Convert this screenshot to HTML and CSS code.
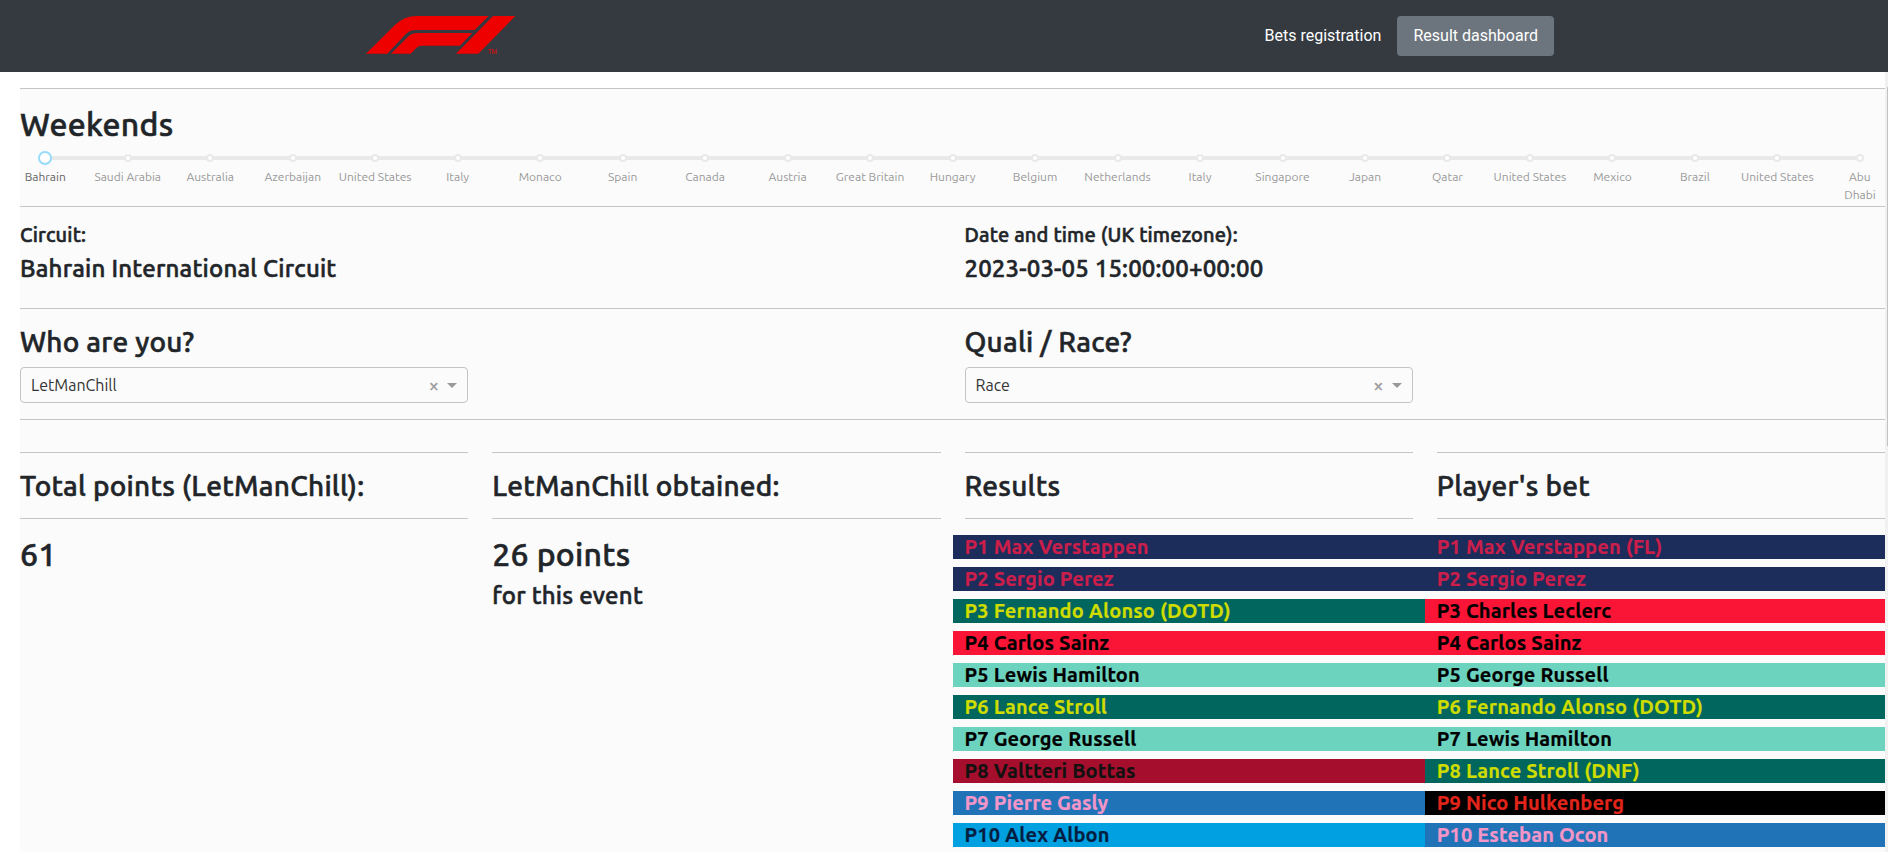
FILE: index.html
```html
<!DOCTYPE html>
<html lang="en">
<head>
<meta charset="utf-8">
<title>Result dashboard</title>
<link rel="stylesheet" href="styles.css">
</head>
<body>
<header class="navbar">
  <svg class="logo" viewBox="79 48 450 114" role="img" aria-label="F1">
    <path d="M79 161 L165 76 Q193 48 232 48 H447 L405 90 H229 Q210 90 198 103 L143 161 Z"/>
    <path d="M154 161 L204 111 Q216 99 232 99 H398 L361 137 H244 Q236 137 229 145 L213 161 Z"/>
    <path d="M349 161 L460 48 H527 L416 161 Z"/>
    <text x="444" y="161">TM</text>
  </svg>
  <nav class="links">
    <a class="link">Bets registration</a>
    <a class="link active">Result dashboard</a>
  </nav>
</header>
<div class="page">
  <main class="content">
    <section class="weekends">
      <h2 class="h2">Weekends</h2>
      <div class="slider">
        <div class="rail"></div>
        <ol class="marks">
          <li class="mark current"><span>Bahrain</span></li>
          <li class="mark"><span>Saudi Arabia</span></li>
          <li class="mark"><span>Australia</span></li>
          <li class="mark"><span>Azerbaijan</span></li>
          <li class="mark"><span>United States</span></li>
          <li class="mark"><span>Italy</span></li>
          <li class="mark"><span>Monaco</span></li>
          <li class="mark"><span>Spain</span></li>
          <li class="mark"><span>Canada</span></li>
          <li class="mark"><span>Austria</span></li>
          <li class="mark"><span>Great Britain</span></li>
          <li class="mark"><span>Hungary</span></li>
          <li class="mark"><span>Belgium</span></li>
          <li class="mark"><span>Netherlands</span></li>
          <li class="mark"><span>Italy</span></li>
          <li class="mark"><span>Singapore</span></li>
          <li class="mark"><span>Japan</span></li>
          <li class="mark"><span>Qatar</span></li>
          <li class="mark"><span>United States</span></li>
          <li class="mark"><span>Mexico</span></li>
          <li class="mark"><span>Brazil</span></li>
          <li class="mark"><span>United States</span></li>
          <li class="mark"><span>Abu<br>Dhabi</span></li>
        </ol>
      </div>
    </section>
    <section class="halves details">
      <div>
        <h5 class="h5">Circuit:</h5>
        <h4 class="h4">Bahrain International Circuit</h4>
      </div>
      <div>
        <h5 class="h5">Date and time (UK timezone):</h5>
        <h4 class="h4 stamp">2023-03-05 15:00:00+00:00</h4>
      </div>
    </section>
    <section class="halves filters">
      <div>
        <h3 class="h3">Who are you?</h3>
        <div class="select"><span class="value">LetManChill</span><span class="clear">×</span><i class="caret"></i></div>
      </div>
      <div>
        <h3 class="h3">Quali / Race?</h3>
        <div class="select"><span class="value">Race</span><span class="clear">×</span><i class="caret"></i></div>
      </div>
    </section>
    <section class="board">
      <div class="col">
        <h3 class="h3 head">Total points (LetManChill):</h3>
        <p class="big">61</p>
      </div>
      <div class="col">
        <h3 class="h3 head">LetManChill obtained:</h3>
        <p class="big">26 points</p>
        <p class="h4 sub">for this event</p>
      </div>
      <div class="col">
        <h3 class="h3 head">Results</h3>
        <ol class="drivers">
          <li class="redbull">P1 Max Verstappen</li>
          <li class="redbull">P2 Sergio Perez</li>
          <li class="aston">P3 Fernando Alonso (DOTD)</li>
          <li class="ferrari">P4 Carlos Sainz</li>
          <li class="mercedes">P5 Lewis Hamilton</li>
          <li class="aston">P6 Lance Stroll</li>
          <li class="mercedes">P7 George Russell</li>
          <li class="alfa">P8 Valtteri Bottas</li>
          <li class="alpine">P9 Pierre Gasly</li>
          <li class="williams">P10 Alex Albon</li>
        </ol>
      </div>
      <div class="col">
        <h3 class="h3 head">Player's bet</h3>
        <ol class="drivers last">
          <li class="redbull">P1 Max Verstappen (FL)</li>
          <li class="redbull">P2 Sergio Perez</li>
          <li class="ferrari">P3 Charles Leclerc</li>
          <li class="ferrari">P4 Carlos Sainz</li>
          <li class="mercedes">P5 George Russell</li>
          <li class="aston">P6 Fernando Alonso (DOTD)</li>
          <li class="mercedes">P7 Lewis Hamilton</li>
          <li class="aston">P8 Lance Stroll (DNF)</li>
          <li class="haas">P9 Nico Hulkenberg</li>
          <li class="alpine">P10 Esteban Ocon</li>
        </ol>
      </div>
    </section>
  </main>
  <div class="scrollbar"><div class="thumb"></div></div>
</div>
</body>
</html>
```
FILE: styles.css
```css
*, *::before { box-sizing: border-box; }
body {
  margin: 0;
  height: 852px;
  overflow: hidden;
  display: flex;
  flex-direction: column;
  background: #fff;
  color: #212529;
  font-family: Ubuntu, "Noto Sans", "Open Sans", sans-serif;
}
h2, h3, h4, h5, p, ol { margin: 0; padding: 0; list-style: none; }

.navbar {
  flex: none;
  height: 72px;
  padding: 0 334px 0 366px;
  display: flex;
  align-items: center;
  justify-content: space-between;
  background: #343a40;
}
.logo { width: 150px; height: 38px; margin-bottom: 2px; fill: #ee0000; }
.logo text { font: 19px "Liberation Sans", sans-serif; }
.links { display: flex; font: 16px/24px Roboto, sans-serif; }
.link { padding: 8px 15.6px 8px 16px; border-radius: 4px; color: #fff; }
.link.active { width: 157px; padding-left: 16.5px; background: #6c757d; }

.page { flex: 1; min-height: 0; display: flex; justify-content: space-between; padding-left: 20px; }
.content { width: 1865px; margin-top: 16px; background: #fbfbfb; }
.scrollbar { width: 3px; padding: 15px 0 0 2px; background: #f1f1f1; }
.thumb { height: 359px; background: #c1c1c1; }

.h2, .h3, .h4, .h5, .big { font-weight: 500; white-space: nowrap; -webkit-text-stroke: 0.55px currentColor; }
.h2, .big { font-size: 32px; line-height: 38px; letter-spacing: 0.28px; }
.h3 { font-size: 28px; line-height: 34px; letter-spacing: 0.25px; }
.h4 { font-size: 24px; line-height: 29px; letter-spacing: 0.22px; }
.h5 { font-size: 20px; line-height: 24px; letter-spacing: 0.17px; }
.stamp { letter-spacing: 0.15px; }

.weekends { height: 118px; padding-top: 16px; border-top: 1px solid #c4c4c4; }
.slider { padding: 8px 25px 0; }
.rail { height: 4px; margin-top: 5px; background: #e9e9e9; }
.marks { display: flex; justify-content: space-between; margin: -10px -41px 0; }
.mark {
  flex: 1;
  display: flex;
  flex-direction: column;
  align-items: center;
  text-align: center;
  color: #999;
  font-size: 12px;
  line-height: 18px;
  white-space: nowrap;
}
.mark::before {
  content: "";
  width: 8px;
  height: 8px;
  margin: 4px 0 6px;
  border: 2px solid #e9e9e9;
  border-radius: 50%;
  background: #fff;
}
.mark.current { color: #666; }
.mark.current::before { width: 14px; height: 14px; margin: 1px 0 3px; border-color: #96dbfa; }

.halves { display: grid; grid-template-columns: 1fr 1fr; column-gap: 24px; border-top: 1px solid #c4c4c4; }
.details { height: 102px; padding-top: 16px; }
.details .h4 { margin-top: 7px; }
.filters { height: 111px; padding-top: 16px; }
.select {
  width: 448px;
  height: 36px;
  margin-top: 8px;
  padding: 0 10px;
  display: flex;
  align-items: center;
  border: 1px solid #c4c4c4;
  border-radius: 4px;
  color: #333;
  font-size: 16px;
}
.value { margin-right: auto; }
.clear { color: #999; font-size: 18px; -webkit-text-stroke: 0.4px #999; }
.caret { margin-left: 8px; border: 5px solid transparent; border-top-color: #999; border-bottom: 0; }

.board {
  display: grid;
  grid-template-columns: repeat(4, 1fr);
  column-gap: 24px;
  padding-top: 32px;
  border-top: 1px solid #c4c4c4;
}
.head { height: 67px; padding-top: 16px; border: solid #c4c4c4; border-width: 1px 0; }
.big { margin-top: 16px; }
.sub { margin-top: 8px; }
.drivers { display: grid; row-gap: 8px; margin: 16px -12px 0; }
.drivers.last { margin-right: 0; }
.drivers li {
  height: 24px;
  padding-left: 12px;
  font-size: 20px;
  line-height: 24px;
  font-weight: 700;
  letter-spacing: 0.15px;
  white-space: nowrap;
  -webkit-text-stroke: 0.2px currentColor;
}
.redbull { background: #1c2c5b; color: #cc1e4a; }
.aston { background: #00665e; color: #cedc00; }
.ferrari { background: #fa1536; color: #000; }
.mercedes { background: #6cd3bf; color: #000; }
.alfa { background: #a50f2d; color: #111; }
.alpine { background: #2173b8; color: #f596c8; }
.williams { background: #00a0e1; color: #041e42; }
.haas { background: #000; color: #e1251b; }
```
